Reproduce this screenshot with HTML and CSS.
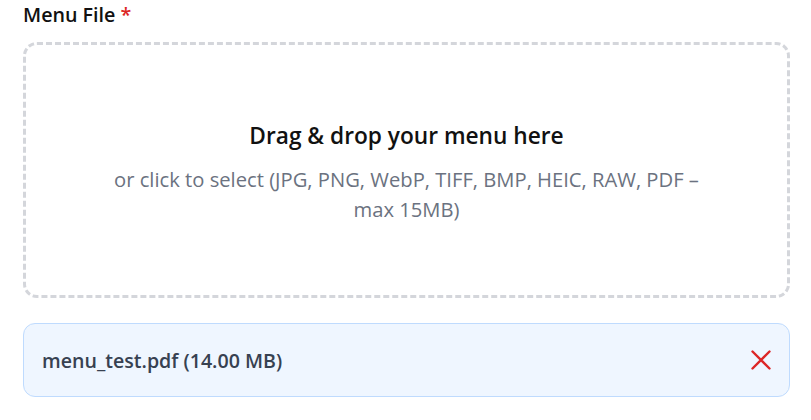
FILE: index.html
```html
<!DOCTYPE html>
<html lang="en">
<head>
<meta charset="utf-8">
<title>Menu File</title>
<link rel="stylesheet" href="styles.css">
</head>
<body>
<div class="field">
  <label class="label">Menu File <span class="req">*</span></label>
  <div class="dropzone">
    <p class="dz-title">Drag &amp; drop your menu here</p>
    <p class="dz-sub">or click to select (JPG, PNG, WebP, TIFF, BMP, HEIC, RAW, PDF – max 15MB)</p>
  </div>
  <div class="file">
    <span class="file-name">menu_test.pdf (14.00 MB)</span>
    <button class="remove" type="button" aria-label="Remove file">
      <svg width="20" height="20" viewBox="0 0 20 20" fill="none" stroke="#dc2626" stroke-width="2.4" stroke-linecap="round">
        <path d="M1.5 1.5 L18.5 18.5 M18.5 1.5 L1.5 18.5"/>
      </svg>
    </button>
  </div>
</div>
</body>
</html>
```
FILE: styles.css
```css
html, body {
  margin: 0;
  padding: 0;
  background: #ffffff;
}
body {
  font-family: "Open Sans", "Noto Sans", "Liberation Sans", sans-serif;
  color: #111111;
}
.field {
  padding: 0 21px 0 23px;
  display: flex;
  flex-direction: column;
}
.label {
  display: block;
  font-size: 19.7px;
  font-weight: 600;
  line-height: 30px;
  height: 30px;
  margin-bottom: 12px;
  color: #111111;
}
.req {
  color: #dc2626;
}
.dropzone {
  box-sizing: border-box;
  height: 256px;
  border: 3px dashed #d4d6db;
  border-radius: 14px;
  display: flex;
  flex-direction: column;
  align-items: center;
  justify-content: center;
  text-align: center;
  padding-top: 5px;
}
.dz-title {
  margin: 0 0 13px;
  font-size: 22.7px;
  font-weight: 600;
  line-height: 30px;
  color: #111111;
}
.dz-sub {
  margin: 0;
  max-width: 620px;
  font-size: 20.2px;
  line-height: 30px;
  color: #6b7280;
}
.file {
  box-sizing: border-box;
  margin-top: 25px;
  height: 74px;
  background: #eff6ff;
  border: 1px solid #bfdbfe;
  border-radius: 12px;
  display: flex;
  align-items: center;
  justify-content: space-between;
  padding: 0 18px 0 18px;
}
.file-name {
  font-size: 19.6px;
  font-weight: 600;
  color: #374151;
}
.remove {
  border: 0;
  background: transparent;
  padding: 0;
  width: 20px;
  height: 20px;
  display: flex;
  align-items: center;
  justify-content: center;
  cursor: pointer;
}
```
